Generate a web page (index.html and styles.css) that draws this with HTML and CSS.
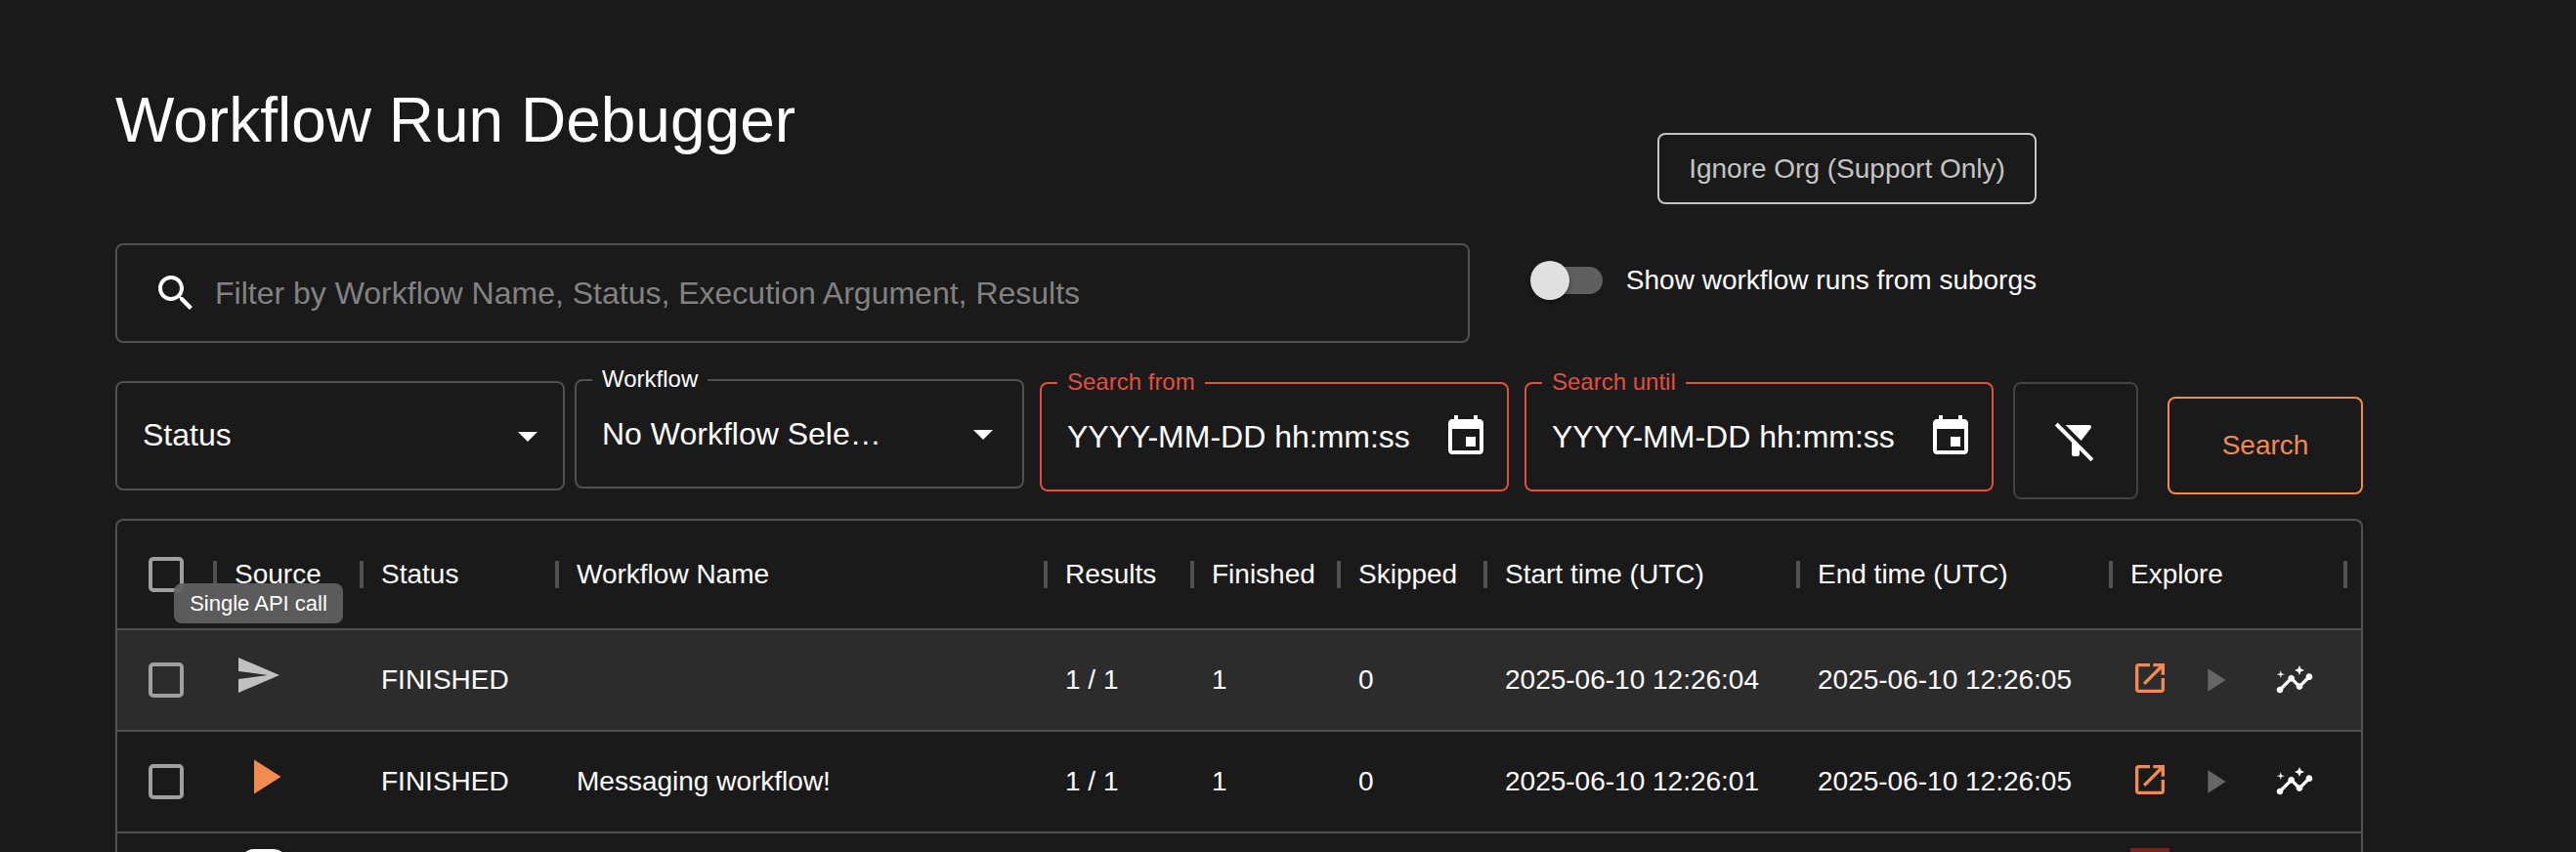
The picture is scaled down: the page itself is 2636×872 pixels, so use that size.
FILE: index.html
```
<!DOCTYPE html>
<html lang="en">
<head>
<meta charset="utf-8">
<title>Workflow Run Debugger</title>
<link rel="stylesheet" href="styles.css">
</head>
<body>
<svg class="sprite" aria-hidden="true">
  <symbol id="search" viewBox="0 0 24 24"><path d="M15.5 14h-.79l-.28-.27C15.41 12.59 16 11.11 16 9.5 16 5.91 13.09 3 9.5 3S3 5.91 3 9.5 5.91 16 9.5 16c1.61 0 3.09-.59 4.23-1.57l.27.28v.79l5 4.99L20.49 19l-4.99-5zm-6 0C7.01 14 5 11.99 5 9.5S7.01 5 9.5 5 14 7.01 14 9.5 11.99 14 9.5 14z"/></symbol>
  <symbol id="caret" viewBox="0 0 24 24"><path d="M7 10l5 5 5-5z"/></symbol>
  <symbol id="calendar" viewBox="0 0 24 24"><path d="M17 12h-5v5h5v-5zM16 1v2H8V1H6v2H5c-1.11 0-1.99.9-1.99 2L3 19c0 1.1.89 2 2 2h14c1.100 0 2-.9 2-2V5c0-1.100-.9-2-2-2h-1V1h-2zm3 18H5V8h14v11z"/></symbol>
  <symbol id="filter-off" viewBox="0 0 24 24"><path d="M19.790 5.610C20.300 4.950 19.830 4 19 4H6.830l7.970 7.970 4.990-6.360zM2.810 2.810 1.390 4.220 10 12.830V19c0 .55.45 1 1 1h2c.55 0 1-.45 1-1v-2.170l5.780 5.780 1.410-1.410L2.810 2.810z"/></symbol>
  <symbol id="send" viewBox="0 0 24 24"><path d="M2.010 21 23 12 2.010 3 2 10l15 2-15 2z"/></symbol>
  <symbol id="play" viewBox="0 0 24 24"><path d="M8 5v14l11-7z"/></symbol>
  <symbol id="open" viewBox="0 0 24 24"><path d="M19 19H5V5h7V3H5c-1.110 0-2 .9-2 2v14c0 1.100.89 2 2 2h14c1.100 0 2-.9 2-2v-7h-2v7zM14 3v2h3.590l-9.830 9.830 1.410 1.410L19 6.410V10h2V3h-7z"/></symbol>
  <symbol id="insights" viewBox="0 0 24 24"><path d="M21 8c-1.450 0-2.260 1.440-1.930 2.510l-3.550 3.560c-.3-.09-.74-.09-1.040 0l-2.550-2.550C12.270 10.450 11.460 9 10 9c-1.450 0-2.270 1.440-1.930 2.520l-4.560 4.550C2.440 15.740 1 16.550 1 18c0 1.100.9 2 2 2 1.450 0 2.260-1.440 1.930-2.510l4.550-4.560c.3.090.74.090 1.040 0l2.550 2.550C12.730 16.550 13.540 18 15 18c1.450 0 2.270-1.440 1.930-2.520l3.560-3.550c1.070.33 2.510-.48 2.510-1.930 0-1.100-.9-2-2-2z"/><path d="m15 9 .94-2.070L18 6l-2.060-.93L15 3l-.92 2.070L12 6l2.080.93zM3.500 11 4 9l2-.5L4 8l-.5-2L3 8l-2 .5L3 9z"/></symbol>
</svg>
<main class="page">
  <header class="top">
    <div class="top-left">
      <h1 class="title">Workflow Run Debugger</h1>
      <label class="searchbar"><svg class="i48"><use href="#search"/></svg><span>Filter by Workflow Name, Status, Execution Argument, Results</span></label>
    </div>
    <div class="top-right">
      <button class="ignore">Ignore Org (Support Only)</button>
      <div class="toggle"><span class="track"><span class="thumb"></span></span><span class="toggle-label">Show workflow runs from suborgs</span></div>
    </div>
  </header>

  <section class="filters">
    <div class="field status"><span class="value">Status</span><svg class="i48"><use href="#caret"/></svg></div>
    <fieldset class="field workflow"><legend>Workflow</legend><span class="value">No Workflow Sele…</span><svg class="i48"><use href="#caret"/></svg></fieldset>
    <fieldset class="field date from"><legend>Search from</legend><span class="value">YYYY-MM-DD hh:mm:ss</span><svg class="i48"><use href="#calendar"/></svg></fieldset>
    <fieldset class="field date until"><legend>Search until</legend><span class="value">YYYY-MM-DD hh:mm:ss</span><svg class="i48"><use href="#calendar"/></svg></fieldset>
    <button class="clear"><svg class="i48"><use href="#filter-off"/></svg></button>
    <button class="go">Search</button>
  </section>

  <section class="grid">
    <div class="row head">
      <div class="cell pick"><span class="box"></span></div>
      <div class="cell">Source</div><div class="cell">Status</div><div class="cell">Workflow Name</div>
      <div class="cell">Results</div><div class="cell">Finished</div><div class="cell">Skipped</div>
      <div class="cell">Start time (UTC)</div><div class="cell">End time (UTC)</div><div class="cell">Explore</div>
      <div class="tooltip">Single API call</div>
    </div>
    <div class="row hover">
      <div class="cell pick"><span class="box"></span></div>
      <div class="cell source"><svg class="i48 send"><use href="#send"/></svg></div><div class="cell">FINISHED</div><div class="cell"></div>
      <div class="cell">1 / 1</div><div class="cell">1</div><div class="cell">0</div>
      <div class="cell">2025-06-10 12:26:04</div><div class="cell">2025-06-10 12:26:05</div>
      <div class="cell explore"><svg class="i40 open"><use href="#open"/></svg><svg class="i40 run"><use href="#play"/></svg><svg class="i40 insights"><use href="#insights"/></svg></div>
    </div>
    <div class="row">
      <div class="cell pick"><span class="box"></span></div>
      <div class="cell source"><svg class="i60"><use href="#play"/></svg></div><div class="cell">FINISHED</div><div class="cell">Messaging workflow!</div>
      <div class="cell">1 / 1</div><div class="cell">1</div><div class="cell">0</div>
      <div class="cell">2025-06-10 12:26:01</div><div class="cell">2025-06-10 12:26:05</div>
      <div class="cell explore"><svg class="i40 open"><use href="#open"/></svg><svg class="i40 run"><use href="#play"/></svg><svg class="i40 insights"><use href="#insights"/></svg></div>
    </div>
    <div class="row next">
      <div class="cell pick"></div>
      <div class="cell"><span class="app"></span></div><div class="cell"></div><div class="cell"></div><div class="cell"></div><div class="cell"></div><div class="cell"></div><div class="cell"></div><div class="cell"></div>
      <div class="cell"><span class="alert"></span></div>
    </div>
  </section>
</main>
</body>
</html>
```
FILE: styles.css
```
* { box-sizing: border-box; }
html, body { margin: 0; height: 872px; overflow: hidden; background: #1a1a1a; }
body { color: #fff; font: 28px/40px "Liberation Sans", Arial, Helvetica, sans-serif; }
.sprite { display: none; }
svg { display: block; flex: none; fill: currentColor; }
.i40 { width: 40px; height: 40px; }
.i48 { width: 48px; height: 48px; }
.i60 { width: 60px; height: 60px; }
button { margin: 0; padding: 0; background: none; color: inherit; font: inherit; border-radius: 8px; white-space: nowrap; }

.page { width: 2300px; height: 872px; margin-left: 118px; overflow: hidden; }
.top { display: flex; justify-content: space-between; width: 1966px; height: 351px; }
.top-left { display: flex; flex-direction: column; width: 1386px; padding-top: 83px; }
.title { margin: 0; height: 166px; font-size: 64px; line-height: 80px; font-weight: 400; white-space: nowrap; }
.searchbar { display: flex; align-items: center; height: 102px; padding-left: 36px; gap: 16px; border: 2px solid #505050; border-radius: 8px; color: #fff; font-size: 32px; }
.searchbar span { color: #828282; }
.top-right { display: flex; flex-direction: column; align-items: flex-end; padding-top: 136px; }
.ignore { width: 388px; height: 73px; border: 2px solid #c5c5c5; color: #c5c5c5; }
.toggle { display: flex; align-items: center; margin-top: 58px; height: 40px; gap: 24px; }
.track { display: flex; align-items: center; width: 68px; height: 28px; border-radius: 14px; background: #5f5f5f; }
.thumb { flex: none; width: 40px; height: 40px; margin-left: -6px; border-radius: 50%; background: #e0e0e0; box-shadow: 0 2px 4px rgba(0,0,0,.4); }
.toggle-label { white-space: nowrap; }

.filters { display: flex; align-items: flex-start; height: 180px; padding-top: 37px; }
.field { display: flex; align-items: center; justify-content: space-between; position: relative; width: 460px; height: 112px; margin: 0; padding: 0 12px 0 26px; border: 2px solid #505050; border-radius: 8px; font-size: 32px; white-space: nowrap; }
.status { margin-top: 2px; }
.status .value { padding-bottom: 2px; }
.workflow { height: 124px; margin: -12px 0 0 10px; padding: 0 16px 12px 26px; }
fieldset.field { min-width: 0; padding-left: 16px; }
fieldset .value { padding-left: 10px; }
legend { height: 26px; padding: 0 10px; font-size: 24px; line-height: 24px; }
.date { width: 480px; height: 123px; margin: -8px 0 0 16px; padding-right: 18px; padding-bottom: 11px; border-color: #e0503f; }
.date legend { height: 24px; line-height: 22px; color: #e0503f; }
.clear { display: flex; align-items: center; justify-content: center; width: 128px; height: 120px; margin: 3px 0 0 20px; border: 2px solid #424242; }
.go { width: 200px; height: 100px; margin: 18px 0 0 30px; border: 2px solid #f28b50; color: #f28b50; }

.grid { height: 341px; overflow: hidden; border: 2px solid #505050; border-bottom: 0; border-radius: 8px 8px 0 0; }
.row { display: grid; grid-template-columns: 100px 150px 200px 500px 150px 150px 150px 320px 320px 240px; position: relative; height: 104px; border-bottom: 2px solid #505050; }
.head { height: 112px; }
.hover { background: #2c2c2c; }
.cell { display: flex; align-items: center; position: relative; padding-left: 20px; white-space: nowrap; }
.pick { padding-left: 32px; }
.box { width: 36px; height: 36px; border: 4px solid #a0a0a0; border-radius: 5px; }
.head .cell::after { content: ""; position: absolute; right: -2px; top: 41px; width: 4px; height: 28px; background: #505050; }
.tooltip { position: absolute; z-index: 2; left: 58px; top: 64px; width: 173px; height: 41px; border-radius: 8px; background: rgba(97,97,97,.92); font-size: 22px; line-height: 41px; text-align: center; }
.source { padding-bottom: 10px; color: #f28b50; }
.source .send { color: #c0c0c0; }
.open { color: #f28b50; }
.explore { padding-bottom: 4px; }
.run { margin-left: 26px; color: #666; }
.run, .insights { margin-top: 4px; }
.insights { margin-left: 42px; }
.next { height: 19px; border-bottom: 0; overflow: hidden; }
.next .cell { align-items: flex-start; height: 19px; overflow: hidden; }
.app { width: 48px; height: 48px; margin: 16px 0 0 6px; border-radius: 14px; background: #fff; }
.alert { width: 40px; height: 40px; margin-top: 15px; background: #7a231c; }
```
